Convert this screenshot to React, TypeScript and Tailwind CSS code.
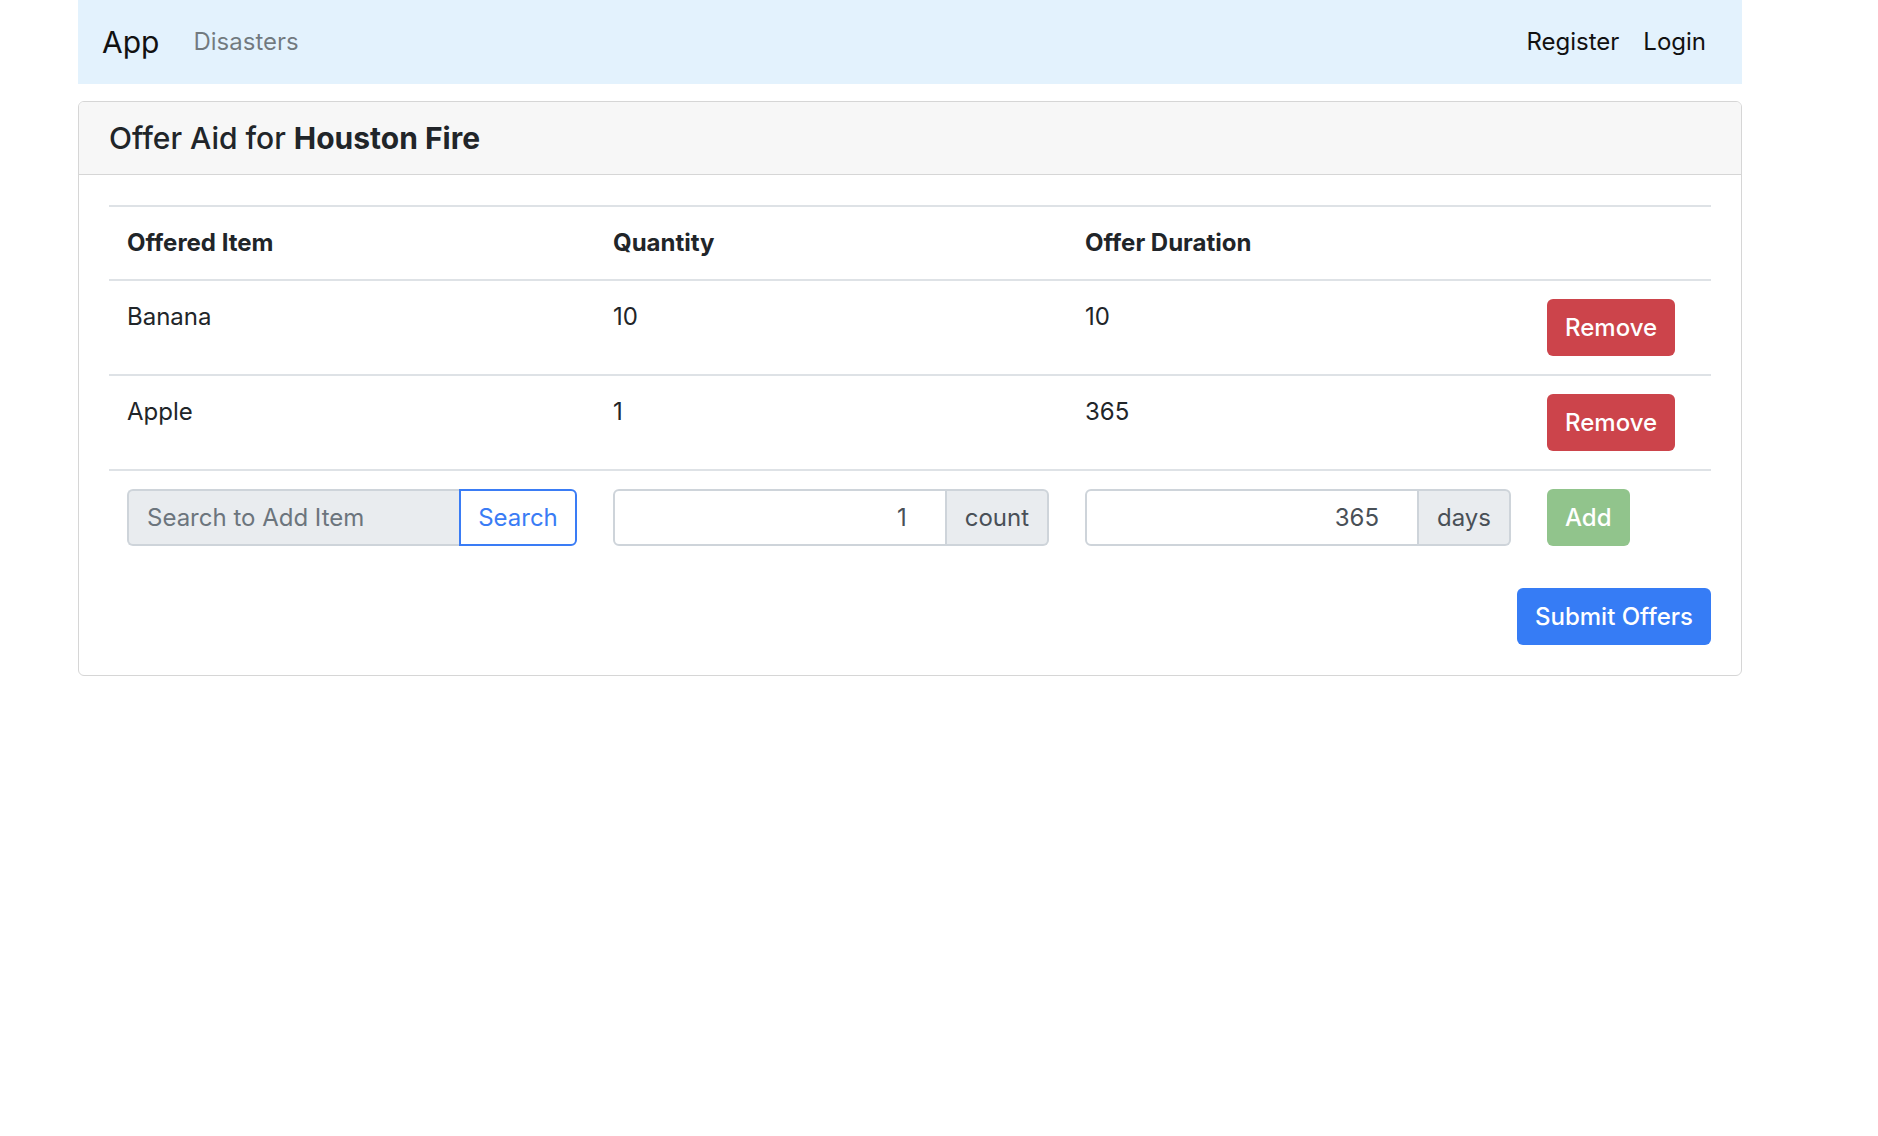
import { useState } from 'react'

type Offer = { item: string; quantity: number; duration: number }

const INITIAL: Offer[] = [
  { item: 'Banana', quantity: 10, duration: 10 },
  { item: 'Apple', quantity: 1, duration: 365 },
]

export default function App() {
  const [offers, setOffers] = useState<Offer[]>(INITIAL)

  return (
    <div className="min-h-screen bg-white font-['Inter',sans-serif] text-[24px] leading-[1.5] text-[#212529]">
      <div className="w-[1664px] ml-[78px]">
        {/* Navbar */}
        <nav className="h-[84px] bg-[#e3f2fd] flex items-center px-[24px]">
          <span className="text-[30px] leading-none mr-[22px] text-[#111]">App</span>
          <a className="px-[12px] text-[rgba(0,0,0,0.5)]">Disasters</a>
          <div className="ml-auto flex">
            <a className="px-[12px] text-[#111]">Register</a>
            <a className="px-[12px] text-[#111]">Login</a>
          </div>
        </nav>

        {/* Card */}
        <div className="mt-[17px] border border-[#d6d6d6] rounded-[6px] overflow-hidden">
          <div className="bg-[#f7f7f7] border-b border-[#d6d6d6] px-[30px] py-[18px]">
            <h5 className="text-[30px] leading-[1.2] font-medium">
              Offer Aid for <span className="font-bold">Houston Fire</span>
            </h5>
          </div>

          <div className="p-[30px]">
            <table className="w-full table-fixed border-collapse mb-[24px]">
              <thead>
                <tr className="border-t-2 border-[#dee2e6] border-b-2">
                  <th className="w-[486px] text-left font-bold p-[18px] align-bottom">Offered Item</th>
                  <th className="w-[472px] text-left font-bold p-[18px] align-bottom">Quantity</th>
                  <th className="w-[462px] text-left font-bold p-[18px] align-bottom">Offer Duration</th>
                  <th className="p-[18px]" />
                </tr>
              </thead>
              <tbody>
                {offers.map((o, i) => (
                  <tr key={i} className="border-b-2 border-[#dee2e6]">
                    <td className="p-[18px] align-top">{o.item}</td>
                    <td className="p-[18px] align-top">{o.quantity}</td>
                    <td className="p-[18px] align-top">{o.duration}</td>
                    <td className="p-[18px] align-top">
                      <button
                        onClick={() => setOffers((prev) => prev.filter((_, j) => j !== i))}
                        className="h-[57px] px-[18px] rounded-[6px] bg-[#cc444b] text-white font-medium"
                      >
                        Remove
                      </button>
                    </td>
                  </tr>
                ))}
                <tr>
                  <td className="p-[18px] align-top">
                    <div className="flex h-[57px]">
                      <input
                        readOnly
                        placeholder="Search to Add Item"
                        className="flex-1 min-w-0 bg-[#e9ecef] border-2 border-r-0 border-[#ced4da] rounded-l-[6px] px-[18px] text-[#495057] placeholder:text-[#6c757d] outline-none"
                      />
                      <button className="w-[118px] border-2 border-[#3a7cf5] rounded-r-[6px] text-[#3a7cf5] bg-white">
                        Search
                      </button>
                    </div>
                  </td>
                  <td className="p-[18px] align-top">
                    <div className="flex h-[57px]">
                      <input
                        defaultValue="1"
                        className="flex-1 min-w-0 bg-white border-2 border-[#ced4da] rounded-l-[6px] pl-[18px] pr-[38px] text-right text-[#495057] outline-none"
                      />
                      <span className="flex items-center px-[18px] bg-[#e9ecef] border-2 border-l-0 border-[#ced4da] rounded-r-[6px] text-[#495057]">
                        count
                      </span>
                    </div>
                  </td>
                  <td className="p-[18px] align-top">
                    <div className="flex h-[57px]">
                      <input
                        defaultValue="365"
                        className="flex-1 min-w-0 bg-white border-2 border-[#ced4da] rounded-l-[6px] pl-[18px] pr-[38px] text-right text-[#495057] outline-none"
                      />
                      <span className="flex items-center px-[18px] bg-[#e9ecef] border-2 border-l-0 border-[#ced4da] rounded-r-[6px] text-[#495057]">
                        days
                      </span>
                    </div>
                  </td>
                  <td className="p-[18px] align-top">
                    <button className="h-[57px] px-[18px] rounded-[6px] bg-[#91c48c] text-white font-medium">
                      Add
                    </button>
                  </td>
                </tr>
              </tbody>
            </table>
            <div className="flex justify-end">
              <button className="h-[57px] px-[18px] rounded-[6px] bg-[#367cf5] text-white font-medium">
                Submit Offers
              </button>
            </div>
          </div>
        </div>
      </div>
    </div>
  )
}
